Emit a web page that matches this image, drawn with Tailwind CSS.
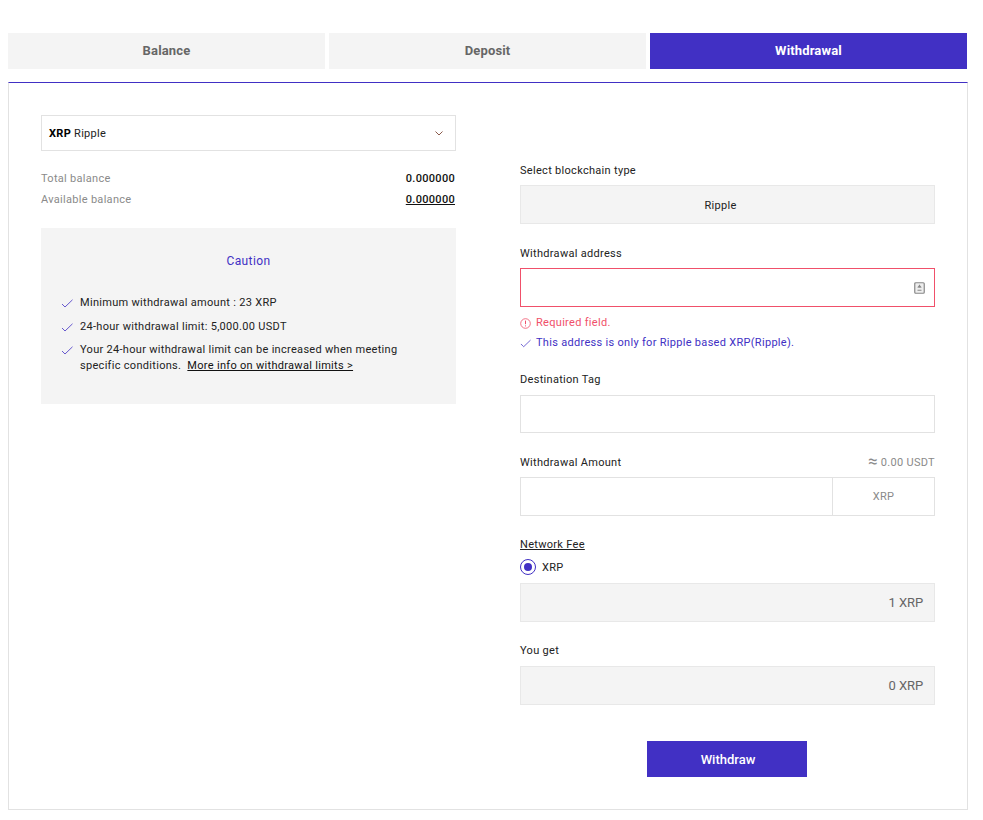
<!DOCTYPE html>
<html lang="en">
    <head>
        <meta charset="UTF-8" />
        <title>Withdrawal</title>
        <script src="https://cdn.jsdelivr.net/npm/@tailwindcss/browser@4"></script>
    </head>
    <body class="bg-white font-['Roboto',sans-serif] text-[11px] leading-4 tracking-[0.3px] text-[#222]">
        <div class="w-[983px] h-[820px] pt-[33px] pl-2">
            <!-- Tabs -->
            <div class="flex gap-1 w-[959px] text-[13px] font-bold tracking-[0.15px]">
                <div class="w-[317px] h-9 flex items-center justify-center bg-[#f4f4f4] text-[#666]">Balance</div>
                <div class="w-[317px] h-9 flex items-center justify-center bg-[#f4f4f4] text-[#666]">Deposit</div>
                <div class="w-[317px] h-9 flex items-center justify-center bg-[#4130c4] text-white">Withdrawal</div>
            </div>

            <div class="mt-[13px] w-[960px] h-[728px] border border-t-[#4130c4] border-x-[#e2e2e2] border-b-[#e2e2e2] pt-8 px-8 flex gap-16">
                <!-- Left column -->
                <div class="w-[415px] shrink-0">
                    <div class="h-9 border border-[#e2e2e2] flex items-center justify-between pl-[7px] pr-3">
                        <span class="pt-px"><b class="font-bold text-black">XRP</b> Ripple</span>
                        <svg width="8" height="5" viewBox="0 0 8 5" fill="none" stroke="#8a5a4a" stroke-width="1"><path d="M0.5 0.5 4 4 7.5 0.5" /></svg>
                    </div>
                    <div class="mt-5 pr-px flex justify-between text-[#8a8a8a]">
                        <span>Total balance</span><span class="font-medium text-[#111]">0.000000</span>
                    </div>
                    <div class="mt-[5px] pr-px flex justify-between text-[#8a8a8a]">
                        <span>Available balance</span><span class="font-medium text-[#111] underline">0.000000</span>
                    </div>

                    <div class="mt-5 h-[176px] bg-[#f4f4f4] pt-[25px] px-5">
                        <p class="text-center text-[#4130c4] text-[12px] tracking-[0.4px]">Caution</p>
                        <ul class="mt-[26px]">
                            <li class="flex gap-[7px] h-4">
                                <svg class="mt-1 shrink-0" width="12" height="9" viewBox="0 0 12 9" fill="none" stroke="#4130c4" stroke-width="0.8"><path d="M1 5 4 8 11.5 0.8" /></svg>
                                <span>Minimum withdrawal amount : 23 XRP</span>
                            </li>
                            <li class="flex gap-[7px] h-4 mt-2">
                                <svg class="mt-1 shrink-0" width="12" height="9" viewBox="0 0 12 9" fill="none" stroke="#4130c4" stroke-width="0.8"><path d="M1 5 4 8 11.5 0.8" /></svg>
                                <span>24-hour withdrawal limit: 5,000.00 USDT</span>
                            </li>
                            <li class="flex gap-[7px] mt-[7px]">
                                <svg class="mt-1 shrink-0" width="12" height="9" viewBox="0 0 12 9" fill="none" stroke="#4130c4" stroke-width="0.8"><path d="M1 5 4 8 11.5 0.8" /></svg>
                                <span>Your 24-hour withdrawal limit can be increased when meeting<br />specific conditions. &nbsp;<a class="underline text-[#111]">More info on withdrawal limits &gt;</a></span>
                            </li>
                        </ul>
                    </div>
                </div>

                <!-- Right column -->
                <div class="w-[415px] shrink-0 pt-[47px]">
                    <label class="block pt-px h-4">Select blockchain type</label>
                    <div class="mt-[7px] h-[39px] bg-[#f4f4f4] border border-[#e8e8e8] flex items-center justify-center pr-[14px] pt-[2px]">Ripple</div>

                    <label class="block mt-[21px] pt-px h-4">Withdrawal address</label>
                    <div class="mt-[7px] h-[39px] border border-[#f0506a] flex items-center justify-end pr-[9px]">
                        <svg width="11" height="12" viewBox="0 0 11 12"><rect x="0.75" y="0.75" width="9.5" height="10.5" rx="1" fill="#eee" stroke="#888" stroke-width="1.2" /><path d="M5.5 2.8v3M3.8 5.6 5.5 3.6 7.2 5.6M3.5 8.3h4" stroke="#888" stroke-width="1.1" fill="none" /></svg>
                    </div>
                    <div class="mt-2 h-4 flex items-center gap-[5px] text-[#f0506a]">
                        <svg width="11" height="11" viewBox="0 0 11 11" fill="none" stroke="#f0506a"><circle cx="5.5" cy="5.5" r="4.8" stroke-width="0.8" /><path d="M5.5 2.6v3.6M5.5 7.4v1" stroke-width="1" /></svg>
                        <span>Required field.</span>
                    </div>
                    <div class="mt-1 h-4 flex items-center gap-[5px] text-[#4130c4]">
                        <svg width="11" height="9" viewBox="0 0 12 9" fill="none" stroke="#4130c4" stroke-width="0.8"><path d="M1 5 4 8 11.5 0.8" /></svg>
                        <span>This address is only for Ripple based XRP(Ripple).</span>
                    </div>

                    <label class="block mt-5 pt-px h-4">Destination Tag</label>
                    <div class="mt-2 h-[38px] border border-[#e2e2e2]"></div>

                    <div class="mt-[21px] pt-px h-4 flex justify-between items-center">
                        <label>Withdrawal Amount</label>
                        <span class="text-[#8a8a8a]"><span class="text-[17px] leading-3 align-[-1px]">≈</span> 0.00 USDT</span>
                    </div>
                    <div class="mt-[7px] h-[39px] border border-[#e2e2e2] flex">
                        <div class="w-[312px] border-r border-[#e2e2e2]"></div>
                        <div class="flex-1 flex items-center justify-center text-[#8a8a8a]">XRP</div>
                    </div>

                    <label class="block mt-5 pt-px h-4"><span class="underline">Network Fee</span></label>
                    <div class="mt-[7px] flex items-center gap-[6px] h-4">
                        <span class="w-4 h-4 rounded-full border border-[#4130c4] flex items-center justify-center"><span class="w-2 h-2 rounded-full bg-[#4130c4]"></span></span>
                        <span class="pt-px">XRP</span>
                    </div>
                    <div class="mt-2 h-[39px] bg-[#f4f4f4] border border-[#e8e8e8] flex items-center justify-end pr-[11px] text-[#666] text-[13px] tracking-[-0.1px]">1 XRP</div>

                    <label class="block mt-5 pt-px h-4">You get</label>
                    <div class="mt-2 h-[39px] bg-[#f4f4f4] border border-[#e8e8e8] flex items-center justify-end pr-[11px] text-[#666] text-[13px] tracking-[-0.1px]">0 XRP</div>

                    <button class="block ml-[127px] mt-9 w-40 h-9 bg-[#4130c4] text-white text-[13px] font-medium tracking-normal pl-[2px] pt-px">Withdraw</button>
                </div>
            </div>
        </div>
    </body>
</html>
